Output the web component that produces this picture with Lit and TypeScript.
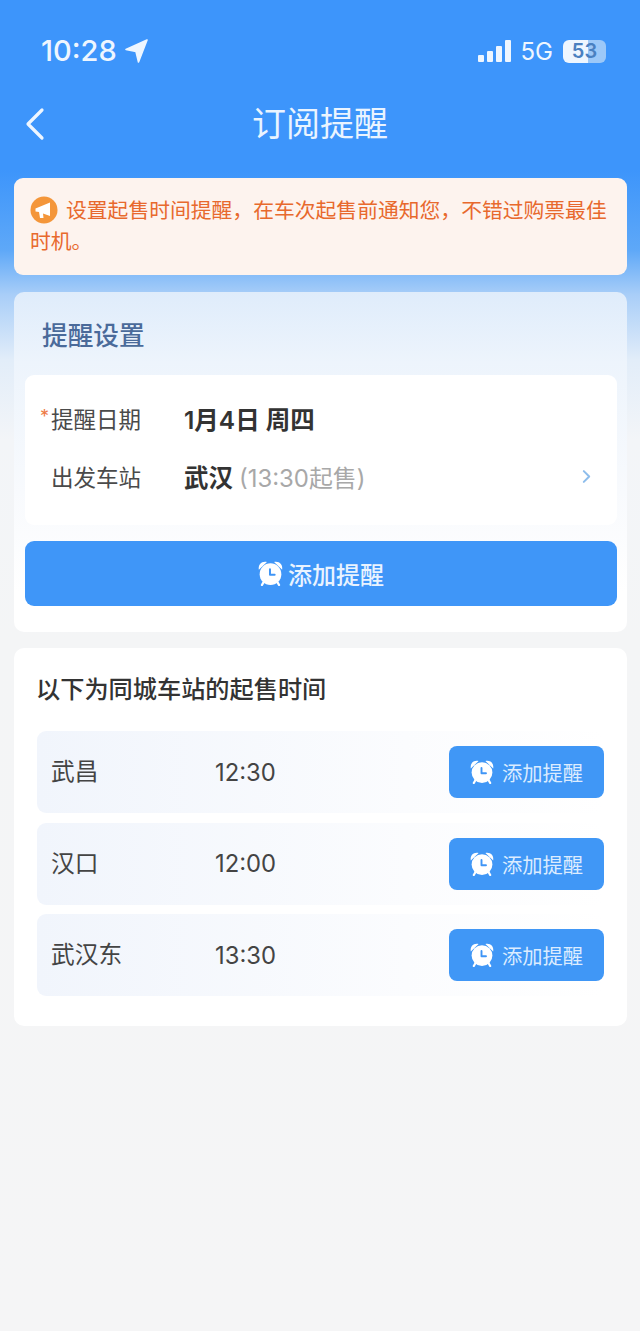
import { LitElement, html, css } from "lit";
import { customElement } from "lit/decorators.js";

const clock = (size: number) => html`<svg class="clock" width=${size} height=${size} viewBox="0 0 24 24">
  <path d="M0.8 8.5 C0 3.2 3.6 0 8.6 1 Z M23.2 8.5 C24 3.2 20.4 0 15.4 1 Z" fill="#fff"/>
  <path d="M5.5 20 L3.8 23 M18.5 20 L20.2 23" stroke="#fff" stroke-width="2.2" stroke-linecap="round"/>
  <circle cx="12" cy="12.6" r="10.4" fill="#fff"/>
  <path d="M11.5 8 V13.2 H16" fill="none" stroke="#3f95f6" stroke-width="1.9" stroke-linecap="round" stroke-linejoin="round"/>
</svg>`;

@customElement("app-root")
export class AppRoot extends LitElement {
  static styles = css`
    :host {
      display: block;
      width: 640px;
      height: 1331px;
      overflow: hidden;
      box-sizing: border-box;
      font-family: "Inter", "Noto Sans CJK SC", sans-serif;
      color: #333;
      background: linear-gradient(180deg, #3d95fb 0, #3d95fb 170px, #5ea8f8 250px, #a9cef8 295px, #e2edf9 360px, #f3f5f8 440px, #f4f5f6 640px, #f5f5f6 100%);
    }
    * { box-sizing: border-box; }
    .status {
      height: 85px;
      padding: 35px 34px 0 41px;
      display: flex;
      justify-content: space-between;
      align-items: flex-start;
      color: #eef6ff;
    }
    .time { display: flex; align-items: center; gap: 8px; font-size: 29px; line-height: 32px; font-weight: 500; font-family: "Inter", sans-serif; }
    .sys { display: flex; align-items: center; gap: 10px; height: 32px; font-size: 24px; font-family: "Inter", sans-serif; }
    .signal { display: flex; align-items: flex-end; gap: 3px; height: 22px; }
    .signal i { display: block; width: 6px; background: #eef6ff; border-radius: 1px; }
    .h7 { height: 7px; }
    .h11 { height: 11px; }
    .h16 { height: 16px; }
    .h22 { height: 22px; }
    .battery {
      width: 43px; height: 23px; border-radius: 6px;
      background: linear-gradient(90deg, #eef6ff 0, #eef6ff 58%, #9cc8f8 58%, #9cc8f8 100%);
      color: #4a80c0; font-size: 20px; font-weight: 600; line-height: 23px; text-align: center;
    }
    .nav {
      height: 78px;
      padding: 0 24px;
      display: grid;
      grid-template-columns: 40px 1fr 40px;
      align-items: center;
      margin-bottom: 15px;
    }
    .nav h1 { margin: 0; text-align: center; font-size: 34px; line-height: 48px; font-weight: 400; color: #eaf4ff; }
    .main { padding: 0 13px 0 14px; display: flex; flex-direction: column; }
    .notice {
      height: 97px;
      border-radius: 9px;
      background: #fdf3ee;
      padding: 17px 10px 0 16px;
      font-size: 20.8px;
      line-height: 31px;
      color: #e8692d;
    }
    .notice svg { vertical-align: -6px; margin-right: 8px; }
    .settings {
      margin-top: 17px;
      height: 340px;
      border-radius: 10px;
      padding: 0 10px 0 11px;
      background: linear-gradient(180deg, #dfecfb 0, #edf4fc 70px, #f8fafd 200px, #ffffff 300px);
    }
    .settings h2 { margin: 0; height: 83px; padding: 26px 0 0 17px; font-size: 25.7px; line-height: 36px; font-weight: 500; color: #4a6a9a; }
    .form {
      height: 150px; border-radius: 9px; background: #fff;
      padding: 14px 26px 0 15px;
    }
    .frow { display: flex; align-items: center; height: 58px; }
    .frow .lab { width: 144px; font-size: 22.5px; color: #4a4a4a; position: relative; padding-left: 11px; }
    .star { position: absolute; left: 0; top: 4px; color: #ee7a45; font-size: 18px; }
    .frow b { font-size: 24.5px; font-weight: 600; color: #333; }
    .frow .dim { font-size: 23.9px; color: #a8a8a8; margin-left: 6px; }
    .frow svg { margin-left: auto; }
    .big {
      margin-top: 16px; height: 65px; border-radius: 9px; background: #3f96f8; color: #e9f3ff;
      display: flex; align-items: center; justify-content: center; gap: 5px; font-size: 24px; font-weight: 500;
    }
    .others {
      margin-top: 16px; height: 378px; border-radius: 10px; background: #fff;
      padding: 24px 23px 0 23px;
    }
    .others h3 { margin: 0 0 23px -1px; font-size: 24.2px; line-height: 36px; font-weight: 500; color: #333; }
    .rows { display: flex; flex-direction: column; gap: 9.5px; }
    .row {
      height: 82px; border-radius: 9px; padding: 0 0 0 14px;
      background: linear-gradient(90deg, #f1f5fc 0, #fbfcfe 65%, #ffffff 100%);
      display: flex; align-items: center; font-size: 23.7px; color: #444;
    }
    .st { width: 164px; padding-bottom: 4px; }
    .tm { font-family: "Inter", sans-serif; font-size: 23.8px; font-weight: 400; }
    .add {
      margin-left: auto; width: 155px; height: 52px; border-radius: 8px; background: #4097f6; color: #dcecff;
      display: flex; align-items: center; justify-content: center; gap: 8px; font-size: 20.3px;
    }
  `;

  render() {
    const rows = [["武昌", "12:30"], ["汉口", "12:00"], ["武汉东", "13:30"]];
    return html`
      <div class="status">
        <div class="time">10:28
          <svg width="23" height="24" viewBox="0 0 23 24"><path d="M22 1 L1 10.5 L11 12.5 L13.5 23 Z" fill="#eef6ff" stroke="#eef6ff" stroke-width="1.6" stroke-linejoin="round"/></svg>
        </div>
        <div class="sys">
          <div class="signal"><i class="h7"></i><i class="h11"></i><i class="h16"></i><i class="h22"></i></div>
          <span>5G</span>
          <div class="battery">53</div>
        </div>
      </div>
      <div class="nav">
        <svg width="24" height="36" viewBox="0 0 24 36"><path d="M18 4 L4 18 L18 32" fill="none" stroke="#eef6ff" stroke-width="3.2" stroke-linecap="round" stroke-linejoin="round"/></svg>
        <h1>订阅提醒</h1>
        <span></span>
      </div>
      <div class="main">
        <div class="notice">
          <svg width="28" height="28" viewBox="0 0 28 28"><circle cx="14" cy="14" r="13.5" fill="#f4963a"/><path d="M5.5 12.5 L20 6.5 V20 L13 17.5 L13.5 22 L10 22 L9 16 L5.5 15.5 Z" fill="#fff"/></svg>设置起售时间提醒，在车次起售前通知您，不错过购票最佳时机。
        </div>
        <div class="settings">
          <h2>提醒设置</h2>
          <div class="form">
            <div class="frow"><span class="lab"><span class="star">*</span>提醒日期</span><b>1月4日 周四</b></div>
            <div class="frow"><span class="lab">出发车站</span><b>武汉</b><span class="dim">(13:30起售)</span>
              <svg width="9" height="15" viewBox="0 0 10 16"><path d="M2 2 L8 8 L2 14" fill="none" stroke="#8dbdec" stroke-width="2.2" stroke-linecap="round" stroke-linejoin="round"/></svg>
            </div>
          </div>
          <div class="big">${clock(25)}<span>添加提醒</span></div>
        </div>
        <div class="others">
          <h3>以下为同城车站的起售时间</h3>
          <div class="rows">
            ${rows.map(([s, t]) => html`<div class="row"><span class="st">${s}</span><span class="tm">${t}</span>
              <div class="add">${clock(24)}<span>添加提醒</span></div></div>`)}
          </div>
        </div>
      </div>
    `;
  }
}
